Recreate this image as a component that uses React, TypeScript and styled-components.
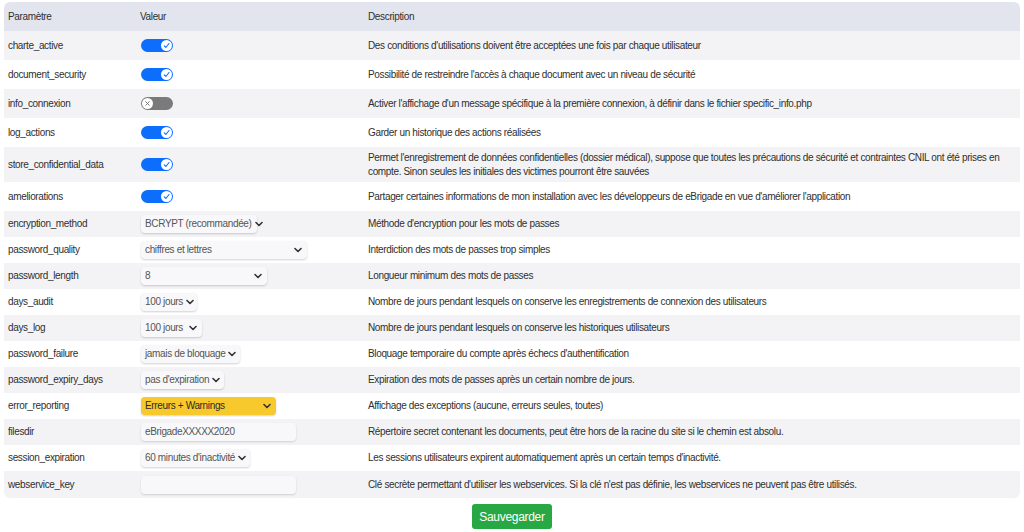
import {createGlobalStyle} from 'styled-components';
import styled from 'styled-components';

const GlobalStyle = createGlobalStyle`
  html, body {
    margin: 0;
    padding: 0;
    background: #fff;
    font-family: "Liberation Sans", Arial, sans-serif;
    color: #2f2f2f;
  }
`;

const Page = styled.div`
  padding: 2px 4px 0 4px;
  display: flex;
  flex-direction: column;
  align-items: center;
`;

const Table = styled.div`
  width: 100%;
  border-radius: 6px;
  overflow: hidden;
  font-size: 10px;
  letter-spacing: -0.35px;
`;

const Row = styled.div<{ $tone: 'head' | 'gray' | 'white'; $h: number }>`
  display: grid;
  grid-template-columns: 132px 228px 1fr;
  align-items: center;
  min-height: ${p => p.$h}px;
  background: ${p => p.$tone === 'head' ? '#e3e5ee' : p.$tone === 'gray' ? '#f3f3f6' : '#fff'};
`;

const Cell = styled.div`
  padding: 0 4px;
  line-height: 14px;
`;

const Desc = styled(Cell)`
  padding-right: 8px;
`;

const Toggle = styled.div<{ $on: boolean }>`
  position: relative;
  width: 32px;
  height: 13px;
  border-radius: 7px;
  margin-left: 1px;
  background: ${p => p.$on ? '#0d6efd' : '#7a7a7a'};
`;

const Knob = styled.div<{ $on: boolean }>`
  position: absolute;
  top: 1px;
  ${p => p.$on ? 'right: 1px;' : 'left: 1px;'}
  width: 11px;
  height: 11px;
  border-radius: 50%;
  background: #fff;
  display: flex;
  align-items: center;
  justify-content: center;
`;

const Select = styled.div<{ $w: number; $warn?: boolean }>`
  display: flex;
  align-items: center;
  justify-content: space-between;
  gap: 3px;
  box-sizing: border-box;
  width: ${p => p.$w}px;
  height: 18px;
  margin-left: 1px;
  padding: 0 5px 0 4px;
  border-radius: 4px;
  white-space: nowrap;
  background: ${p => p.$warn ? '#f8c92c' : '#f8f8fa'};
  color: ${p => p.$warn ? '#2a2a2a' : '#555'};
  box-shadow: 0 1px 2px rgba(0, 0, 0, 0.18);

  svg { flex-shrink: 0; }
`;

const Input = styled.div`
  box-sizing: border-box;
  width: 155px;
  height: 18px;
  margin-left: 1px;
  padding: 0 4px;
  display: flex;
  align-items: center;
  border-radius: 4px;
  background: #f8f8fa;
  color: #555;
  box-shadow: 0 1px 2px rgba(0, 0, 0, 0.15);
`;

const SaveButton = styled.button`
  margin-top: 6px;
  width: 80px;
  height: 25px;
  border: none;
  border-radius: 3px;
  background: #28a745;
  color: #fff;
  font-family: "Liberation Sans", Arial, sans-serif;
  font-size: 12px;
  letter-spacing: -0.3px;
  cursor: pointer;
`;

const Chevron = () => (
  <svg width="8" height="6" viewBox="0 0 8 6">
    <path d="M1 1.5 L4 4.5 L7 1.5" fill="none" stroke="#333" strokeWidth="1.6" strokeLinecap="round" strokeLinejoin="round"/>
  </svg>
);

const Check = () => (
  <svg width="9" height="9" viewBox="0 0 10 10">
    <path d="M2.5 5.3 L4.3 7.2 L7.8 2.8" fill="none" stroke="#0d6efd" strokeWidth="1.2" strokeLinecap="round" strokeLinejoin="round"/>
  </svg>
);

const Cross = () => (
  <svg width="9" height="9" viewBox="0 0 10 10">
    <path d="M3 3 L7 7 M7 3 L3 7" fill="none" stroke="#777" strokeWidth="1.1" strokeLinecap="round"/>
  </svg>
);

type Value =
  | { kind: 'toggle'; on: boolean }
  | { kind: 'select'; text: string; w: number; warn?: boolean }
  | { kind: 'input'; text: string };

type Param = { name: string; value: Value; desc: string; h: number };

const params: Param[] = [
  {name: 'charte_active', value: {kind: 'toggle', on: true}, desc: "Des conditions d'utilisations doivent être acceptées une fois par chaque utilisateur", h: 29},
  {name: 'document_security', value: {kind: 'toggle', on: true}, desc: "Possibilité de restreindre l'accès à chaque document avec un niveau de sécurité", h: 29},
  {name: 'info_connexion', value: {kind: 'toggle', on: false}, desc: "Activer l'affichage d'un message spécifique à la première connexion, à définir dans le fichier specific_info.php", h: 29},
  {name: 'log_actions', value: {kind: 'toggle', on: true}, desc: 'Garder un historique des actions réalisées', h: 29},
  {name: 'store_confidential_data', value: {kind: 'toggle', on: true}, desc: "Permet l'enregistrement de données confidentielles (dossier médical), suppose que toutes les précautions de sécurité et contraintes CNIL ont été prises en compte. Sinon seules les initiales des victimes pourront être sauvées", h: 35},
  {name: 'ameliorations', value: {kind: 'toggle', on: true}, desc: "Partager certaines informations de mon installation avec les développeurs de eBrigade en vue d'améliorer l'application", h: 29},
  {name: 'encryption_method', value: {kind: 'select', text: 'BCRYPT (recommandée)', w: 116}, desc: "Méthode d'encryption pour les mots de passes", h: 26},
  {name: 'password_quality', value: {kind: 'select', text: 'chiffres et lettres', w: 166}, desc: 'Interdiction des mots de passes trop simples', h: 26},
  {name: 'password_length', value: {kind: 'select', text: '8', w: 126}, desc: 'Longueur minimum des mots de passes', h: 26},
  {name: 'days_audit', value: {kind: 'select', text: '100 jours', w: 56}, desc: 'Nombre de jours pendant lesquels on conserve les enregistrements de connexion des utilisateurs', h: 26},
  {name: 'days_log', value: {kind: 'select', text: '100 jours', w: 61}, desc: 'Nombre de jours pendant lesquels on conserve les historiques utilisateurs', h: 26},
  {name: 'password_failure', value: {kind: 'select', text: 'jamais de bloquage', w: 99}, desc: "Bloquage temporaire du compte après échecs d'authentification", h: 26},
  {name: 'password_expiry_days', value: {kind: 'select', text: "pas d'expiration", w: 83}, desc: 'Expiration des mots de passes après un certain nombre de jours.', h: 26},
  {name: 'error_reporting', value: {kind: 'select', text: 'Erreurs + Warnings', w: 135, warn: true}, desc: 'Affichage des exceptions (aucune, erreurs seules, toutes)', h: 26},
  {name: 'filesdir', value: {kind: 'input', text: 'eBrigadeXXXXX2020'}, desc: 'Répertoire secret contenant les documents, peut être hors de la racine du site si le chemin est absolu.', h: 26},
  {name: 'session_expiration', value: {kind: 'select', text: "60 minutes d'inactivité", w: 109}, desc: "Les sessions utilisateurs expirent automatiquement après un certain temps d'inactivité.", h: 26},
  {name: 'webservice_key', value: {kind: 'input', text: ''}, desc: "Clé secrète permettant d'utiliser les webservices. Si la clé n'est pas définie, les webservices ne peuvent pas être utilisés.", h: 27},
];

function ValueCell({value}: { value: Value }) {
  if (value.kind === 'toggle') {
    return (
      <Toggle $on={value.on}>
        <Knob $on={value.on}>{value.on ? <Check/> : <Cross/>}</Knob>
      </Toggle>
    );
  }
  if (value.kind === 'select') {
    return (
      <Select $w={value.w} $warn={value.warn}>
        <span>{value.text}</span>
        <Chevron/>
      </Select>
    );
  }
  return <Input>{value.text}</Input>;
}

export default function App() {
  return (
    <Page>
      <GlobalStyle/>
      <Table>
        <Row $tone="head" $h={29}>
          <Cell>Paramètre</Cell>
          <Cell>Valeur</Cell>
          <Cell>Description</Cell>
        </Row>
        {params.map((p, i) => (
          <Row key={p.name} $tone={i % 2 === 0 ? 'gray' : 'white'} $h={p.h}>
            <Cell>{p.name}</Cell>
            <Cell><ValueCell value={p.value}/></Cell>
            <Desc>{p.desc}</Desc>
          </Row>
        ))}
      </Table>
      <SaveButton>Sauvegarder</SaveButton>
    </Page>
  );
}
